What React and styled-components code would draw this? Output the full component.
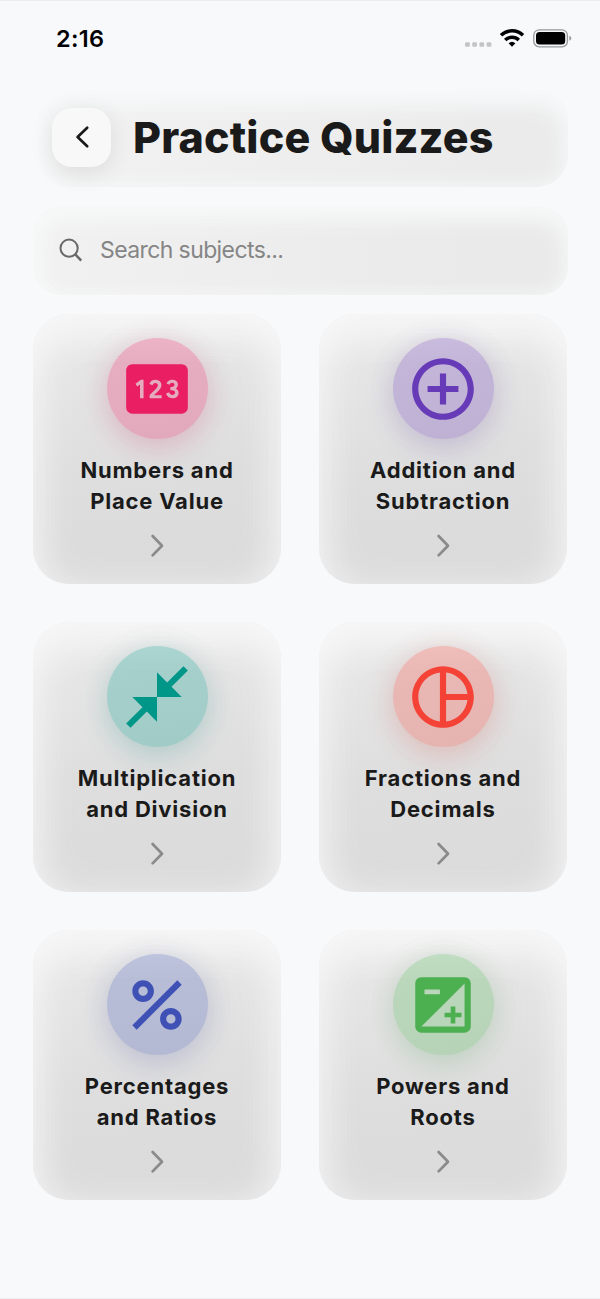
import React from 'react';
import styled, { createGlobalStyle } from 'styled-components';
import {
  MdPin,
  MdAddCircleOutline,
  MdCloseFullscreen,
  MdPieChartOutline,
  MdPercent,
  MdExposure,
} from 'react-icons/md';

const GlobalStyle = createGlobalStyle`
  * { box-sizing: border-box; }
  body {
    margin: 0;
    background: #f7f9fb;
    font-family: Inter, "Liberation Sans", sans-serif;
    color: #1a1a1a;
  }
`;

const Screen = styled.div`
  width: 600px;
  height: 1299px;
  overflow: hidden;
  border-top: 1px solid #ebedee;
  border-bottom: 1px solid #eeeff1;
  display: flex;
  flex-direction: column;
`;

const StatusBar = styled.div`
  height: 89px;
  flex: none;
  display: flex;
  align-items: flex-start;
  justify-content: space-between;
  padding: 24px 28px 0 56px;
`;

const Clock = styled.time`
  font-size: 23.5px;
  line-height: 28px;
  font-weight: 600;
  letter-spacing: 0.3px;
  color: #000;
`;

const StatusIcons = styled.svg`
  display: block;
  margin-top: 1px;
`;

const Content = styled.main`
  display: flex;
  flex-direction: column;
  padding: 0 32px 0 33px;
`;

const Header = styled.header`
  height: 97px;
  margin-left: 6px;
  display: flex;
  align-items: center;
  gap: 22px;
  padding: 0 14px 3px 13px;
  border-radius: 32px;
  background: linear-gradient(90deg, #f2f2f2, #ebebeb 85%);
  box-shadow:
    inset 0 12px 24px 0 #f7f9fa,
    inset 8px 4px 24px 0 #f7f9fa;
`;

const BackButton = styled.button`
  width: 59px;
  height: 59px;
  flex: none;
  border: 0;
  padding: 0;
  border-radius: 20px;
  background: #f8f8f8;
  box-shadow: 0 5px 24px rgba(0, 0, 0, 0.09);
  display: flex;
  align-items: center;
  justify-content: center;
`;

const Title = styled.h1`
  margin: 0;
  font-size: 43px;
  line-height: 52px;
  font-weight: 800;
  letter-spacing: 0.15px;
  white-space: nowrap;
`;

const SearchField = styled.label`
  height: 88px;
  margin-top: 20px;
  display: flex;
  align-items: center;
  gap: 17px;
  padding: 0 26px 3px;
  border-radius: 28px;
  background: linear-gradient(90deg, #f1f1f1, #eaeaea 80%);
  box-shadow:
    inset 0 10px 24px 0 #f7f8f8,
    inset 6px 4px 20px 0 #f7f8f8;
`;

const Placeholder = styled.span`
  font-size: 23px;
  line-height: 30px;
  letter-spacing: -0.6px;
  color: #858585;
`;

const Grid = styled.div`
  margin-top: 19px;
  display: grid;
  grid-template-columns: 248px 248px;
  column-gap: 38px;
  row-gap: 38px;
`;

const Card = styled.article`
  height: 270px;
  display: flex;
  flex-direction: column;
  align-items: center;
  padding-top: 24px;
  border-radius: 36px;
  background: linear-gradient(172deg, #e8e8e8 10%, #dedede 55%, #dadada);
  box-shadow:
    inset 0 22px 40px -8px #f7f7f7,
    inset 0 10px 46px 0 rgba(247, 247, 247, 0.8);
`;

const IconDisc = styled.div`
  width: 101px;
  height: 101px;
  flex: none;
  border-radius: 50%;
  display: flex;
  align-items: center;
  justify-content: center;
  color: rgb(${(p) => p.$rgb});
  background: rgba(${(p) => p.$rgb}, 0.28);
  box-shadow: 0 8px 30px rgba(${(p) => p.$rgb}, 0.19), 0 0 34px rgba(0, 0, 0, 0.05);
`;

const CardTitle = styled.h2`
  margin: 16px 0 16px;
  font-size: 22px;
  line-height: 31px;
  font-weight: 700;
  letter-spacing: 0.8px;
  text-align: center;
  white-space: pre-line;
`;

const subjects = [
  { title: 'Numbers and\nPlace Value', rgb: '233, 30, 99', Icon: MdPin },
  { title: 'Addition and\nSubtraction', rgb: '103, 58, 183', Icon: MdAddCircleOutline },
  { title: 'Multiplication\nand Division', rgb: '0, 150, 136', Icon: MdCloseFullscreen },
  { title: 'Fractions and\nDecimals', rgb: '244, 67, 54', Icon: MdPieChartOutline },
  { title: 'Percentages\nand Ratios', rgb: '63, 81, 181', Icon: MdPercent },
  { title: 'Powers and\nRoots', rgb: '76, 175, 80', Icon: MdExposure },
];

function DeviceStatus() {
  return (
    <StatusIcons width="108" height="24" viewBox="464 26 108 24" fill="none">
      <g fill="#c3c4c6">
        <rect x="465" y="42.2" width="4.8" height="4.6" rx="1.3" />
        <rect x="472.2" y="42.2" width="4.8" height="4.6" rx="1.3" />
        <rect x="479.4" y="42.2" width="4.8" height="4.6" rx="1.3" />
        <rect x="486.6" y="42.2" width="4.8" height="4.6" rx="1.3" />
      </g>
      <g stroke="#000" strokeWidth="3.5">
        <path d="M501 35.2a16 16 0 0 1 22 0" />
        <path d="M505.2 40a9.8 9.8 0 0 1 13.6 0" />
      </g>
      <path d="M508.6 43.3a5 5 0 0 1 6.8 0L512 46.8z" fill="#000" />
      <rect x="533.8" y="29.8" width="33.6" height="17" rx="5.4" stroke="#97989a" strokeWidth="1.3" />
      <rect x="536" y="32" width="29.2" height="12.6" rx="3.5" fill="#000" />
      <path d="M569.3 35.8c2.6.9 2.6 4.1 0 5z" fill="#97989a" />
    </StatusIcons>
  );
}

function Chevron() {
  return (
    <svg width="16" height="26" viewBox="0 0 16 26" fill="none" stroke="#8a8a8a" strokeWidth="2.7" strokeLinecap="round" strokeLinejoin="round">
      <path d="M3.6 3L13 12.7L3.6 22.4" />
    </svg>
  );
}

export default function App() {
  return (
    <>
      <GlobalStyle />
      <Screen>
        <StatusBar>
          <Clock>2:16</Clock>
          <DeviceStatus />
        </StatusBar>
        <Content>
          <Header>
            <BackButton aria-label="Back">
              <svg width="26" height="26" viewBox="0 0 26 26" fill="none" stroke="#1a1a1a" strokeWidth="2.7" strokeLinecap="round" strokeLinejoin="round">
                <path d="M18.2 3.8L8.6 13L18.2 22.2" />
              </svg>
            </BackButton>
            <Title>Practice Quizzes</Title>
          </Header>
          <SearchField>
            <svg width="24" height="24" viewBox="0 0 24 24" fill="none" stroke="#686868" strokeWidth="2">
              <circle cx="10.1" cy="10.2" r="8.6" />
              <path d="M16.1 16.2L22.2 22.6" strokeWidth="2.5" />
            </svg>
            <Placeholder>Search subjects...</Placeholder>
          </SearchField>
          <Grid>
            {subjects.map(({ title, rgb, Icon }) => (
              <Card key={title}>
                <IconDisc $rgb={rgb}>
                  <Icon size={74} />
                </IconDisc>
                <CardTitle>{title}</CardTitle>
                <Chevron />
              </Card>
            ))}
          </Grid>
        </Content>
      </Screen>
    </>
  );
}
